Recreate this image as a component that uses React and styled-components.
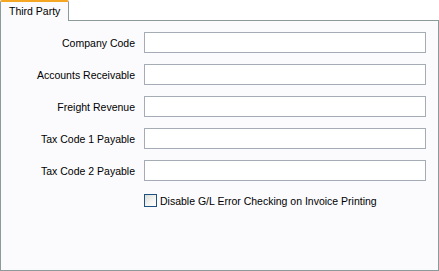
import styled, { createGlobalStyle } from "styled-components";

const GlobalStyle = createGlobalStyle`
  html, body {
    margin: 0;
    padding: 0;
    background: #ffffff;
  }
  body {
    font-family: "Liberation Sans", Arial, sans-serif;
    font-size: 10.5px;
    color: #000000;
  }
`;

const fields = [
  "Company Code",
  "Accounts Receivable",
  "Freight Revenue",
  "Tax Code 1 Payable",
  "Tax Code 2 Payable",
];

function App() {
  return (
    <Frame>
      <GlobalStyle />
      <TabStrip>
        <Tab>Third Party</Tab>
      </TabStrip>
      <Panel>
        <Form>
          {fields.map((f) => (
            <Row key={f}>
              <Label>{f}</Label>
              <TextBox type="text" />
            </Row>
          ))}
          <CheckRow>
            <Box />
            <span>Disable G/L Error Checking on Invoice Printing</span>
          </CheckRow>
        </Form>
      </Panel>
    </Frame>
  );
}

const Frame = styled.div`
  width: 439px;
  height: 271px;
  display: flex;
  flex-direction: column;
`;

const TabStrip = styled.div`
  height: 20px;
  display: flex;
  align-items: flex-end;
  position: relative;
  z-index: 1;
`;

const Tab = styled.div`
  box-sizing: border-box;
  width: 69px;
  height: 21px;
  margin-bottom: -1px;
  padding: 3px 0 0 8px;
  background: #fbfbfd;
  border-left: 1px solid #8c9a9a;
  border-right: 1px solid #8c9a9a;
  border-top: 2px solid #f5a623;
  border-radius: 2px 2px 0 0;
  white-space: nowrap;
`;

const Panel = styled.div`
  box-sizing: border-box;
  height: 251px;
  background: #fbfbfd;
  border: 1px solid #8c9a9a;
`;

const Form = styled.div`
  display: grid;
  grid-template-columns: 134px 282px;
  column-gap: 9px;
  row-gap: 11px;
  padding-top: 11px;
`;

const Row = styled.div`
  display: contents;
`;

const Label = styled.label`
  text-align: right;
  align-self: center;
  white-space: nowrap;
`;

const TextBox = styled.input`
  box-sizing: border-box;
  width: 282px;
  height: 21px;
  margin: 0;
  border: 1px solid #a5acb5;
  background: #ffffff;
  outline: none;
`;

const CheckRow = styled.div`
  grid-column: 2;
  height: 17px;
  display: flex;
  align-items: center;
  gap: 3px;
  white-space: nowrap;
`;

const Box = styled.span`
  box-sizing: border-box;
  width: 13px;
  height: 13px;
  border: 1px solid #1c5180;
  background: linear-gradient(135deg, #dcdcd7 0%, #f5f5f3 60%, #ffffff 100%);
`;

export default App;
